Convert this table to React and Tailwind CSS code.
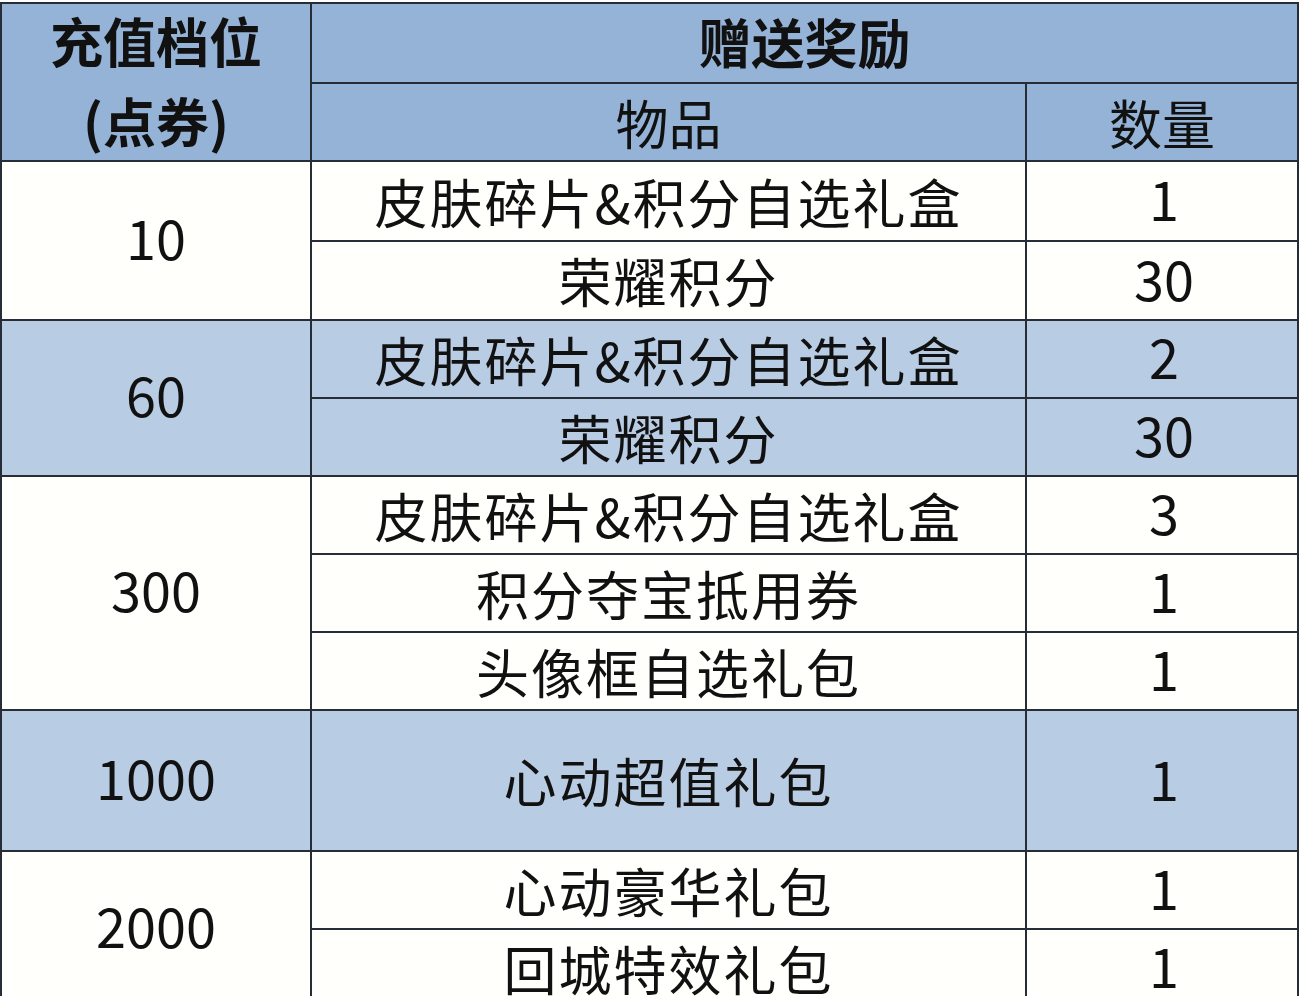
const groups = [
  { tier: "10", tone: "white", items: [["皮肤碎片&积分自选礼盒", "1"], ["荣耀积分", "30"]] },
  { tier: "60", tone: "blue", items: [["皮肤碎片&积分自选礼盒", "2"], ["荣耀积分", "30"]] },
  {
    tier: "300",
    tone: "white",
    items: [["皮肤碎片&积分自选礼盒", "3"], ["积分夺宝抵用券", "1"], ["头像框自选礼包", "1"]],
  },
  { tier: "1000", tone: "blue", items: [["心动超值礼包", "1"]] },
  { tier: "2000", tone: "white", items: [["心动豪华礼包", "1"], ["回城特效礼包", "1"]] },
];

const spanClass = { 1: "row-span-1", 2: "row-span-2", 3: "row-span-3" };

const Cell = ({ tone, className = "", children }) => (
  <div
    className={`flex items-center justify-center text-[53px] leading-none text-[#111] ${
      tone === "blue" ? "bg-[#b8cce4]" : tone === "head" ? "bg-[#95b3d7]" : "bg-[#fffffc]"
    } ${className}`}
  >
    {children}
  </div>
);

const App = () => {
  return (
    <div
      className="w-[1300px] h-[996px] overflow-hidden bg-white pt-[2px]"
      style={{ fontFamily: '"Noto Sans CJK SC", "Noto Sans", sans-serif' }}
    >
      <div className="grid w-[1299px] grid-cols-[308px_713px_270px] grid-rows-[78px_76px_78px_77px_76px_76px_76px_76px_76px_139px_76px_76px] gap-[2px] bg-[#262d36] p-[2px]">
        {/* header */}
        <Cell tone="head" className="row-span-2 flex-col font-bold pb-[4px]">
          <span className="leading-[80px]">充值档位</span>
          <span className="leading-[80px]">(点券)</span>
        </Cell>
        <Cell tone="head" className="col-span-2 font-bold pb-[4px]">
          赠送奖励
        </Cell>
        <Cell tone="head">物品</Cell>
        <Cell tone="head">数量</Cell>

        {/* body */}
        {groups.map((g) => (
          <>
            <Cell key={g.tier} tone={g.tone} className={`${spanClass[g.items.length]} pb-[8px] text-[54px]`}>
              {g.tier}
            </Cell>
            {g.items.map(([name, qty], i) => (
              <>
                <Cell key={`${g.tier}-n-${i}`} tone={g.tone} className="tracking-[2px]">
                  {name}
                </Cell>
                <Cell key={`${g.tier}-q-${i}`} tone={g.tone} className="pb-[6px] pl-[4px] text-[54px]">
                  {qty}
                </Cell>
              </>
            ))}
          </>
        ))}
      </div>
    </div>
  );
};

export default App;
